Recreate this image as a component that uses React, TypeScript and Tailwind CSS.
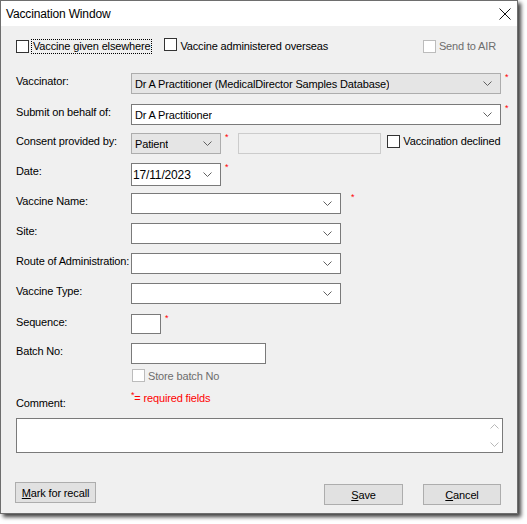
import React from "react";

const font = { fontFamily: '"Liberation Sans", Arial, sans-serif' };

function Chevron({ color = "#606060" }: { color?: string }) {
  return (
    <svg width="9" height="5" viewBox="0 0 9 5" className="shrink-0">
      <path d="M0.5 0.5 L4.5 4.5 L8.5 0.5" fill="none" stroke={color} strokeWidth="1" />
    </svg>
  );
}

function Star({ className = "" }: { className?: string }) {
  return <span className={`text-[9px] leading-none text-[#ff0000] self-start ${className}`}>*</span>;
}

function Check({ disabled = false }: { disabled?: boolean }) {
  return (
    <span
      className={`inline-block w-[13px] h-[13px] shrink-0 bg-white border ${
        disabled ? "border-[#bcbcbc]" : "border-[#333333]"
      }`}
    />
  );
}

interface ComboProps {
  value?: string;
  width: string;
  height?: string;
  gray?: boolean;
}

function Combo({ value = "", width, height = "h-[21px]", gray = false }: ComboProps) {
  return (
    <div
      className={`${width} ${height} flex items-center justify-between pl-[3px] pr-[8px] border shrink-0 ${
        gray ? "bg-[#e5e5e5] border-[#adadad]" : "bg-white border-[#7a7a7a]"
      }`}
    >
      <span className="truncate text-[#000]">{value}</span>
      <Chevron />
    </div>
  );
}

function Row({ label, mt, children }: { label: string; mt: string; children: React.ReactNode }) {
  return (
    <div className={`flex items-start ${mt}`}>
      <div className="w-[115px] shrink-0 pt-[1px]">{label}</div>
      {children}
    </div>
  );
}

function Button({ children, className = "" }: { children: React.ReactNode; className?: string }) {
  return (
    <div
      className={`h-[21px] flex items-center justify-center bg-[#e1e1e1] border border-[#adadad] ${className}`}
    >
      {children}
    </div>
  );
}

export default function App() {
  return (
    <div
      className="w-[527px] h-[524px] bg-white text-[11px] leading-[14px] tracking-[-0.15px] text-black whitespace-nowrap"
      style={font}
    >
      <div className="w-[518px] h-[514px] flex flex-col bg-[#f0f0f0] border border-[#6e6e6e] shadow-[3px_3px_4px_rgba(0,0,0,0.75)]">
        {/* 标题栏 */}
        <div className="h-[25px] bg-white flex items-center justify-between pl-[5px] pr-[6px] shrink-0">
          <span className="text-[12px]">Vaccination Window</span>
          <svg width="12" height="12" viewBox="0 0 12 12">
            <path d="M0.5 0.5 L11.5 11.5 M11.5 0.5 L0.5 11.5" stroke="#111" strokeWidth="1" />
          </svg>
        </div>

        <div className="flex flex-col pl-[15px]">
          {/* 复选框行 */}
          <div className="flex items-center h-[16px] mt-[12px]">
            <Check />
            <span className="ml-[2px] px-[1px] border border-dotted border-black leading-[13px]">
              Vaccine given elsewhere
            </span>
            <span className="ml-[12px]">
              <Check />
            </span>
            <span className="ml-[3px]">Vaccine administered overseas</span>
            <span className="ml-auto mr-[21px] flex items-center">
              <Check disabled />
              <span className="ml-[3px] text-[#6d6d6d]">Send to AIR</span>
            </span>
          </div>

          <Row label="Vaccinator:" mt="mt-[19px]">
            <Combo value="Dr A Practitioner (MedicalDirector Samples Database)" width="w-[370px]" gray />
            <Star className="ml-[4px]" />
          </Row>

          <Row label="Submit on behalf of:" mt="mt-[10px]">
            <Combo value="Dr A Practitioner" width="w-[370px]" />
            <Star className="ml-[4px]" />
          </Row>

          <Row label="Consent provided by:" mt="mt-[8px]">
            <Combo value="Patient" width="w-[90px]" gray />
            <Star className="ml-[4px]" />
            <div className="w-[143px] h-[21px] ml-[10px] bg-[#f0f0f0] border border-[#cccccc] shrink-0" />
            <span className="ml-[6px] mt-[1px] flex items-center">
              <Check />
              <span className="ml-[3px]">Vaccination declined</span>
            </span>
          </Row>

          <Row label="Date:" mt="mt-[9px]">
            <div className="w-[90px] h-[23px] flex items-center justify-between pl-[1px] pr-[8px] bg-white border border-[#7a7a7a] shrink-0">
              <span className="text-[12px]">17/11/2023</span>
              <Chevron />
            </div>
            <Star className="ml-[4px]" />
          </Row>

          <Row label="Vaccine Name:" mt="mt-[7px]">
            <Combo width="w-[210px]" />
            <Star className="ml-[10px]" />
          </Row>

          <Row label="Site:" mt="mt-[9px]">
            <Combo width="w-[210px]" />
          </Row>

          <Row label="Route of Administration:" mt="mt-[9px]">
            <Combo width="w-[210px]" />
          </Row>

          <Row label="Vaccine Type:" mt="mt-[9px]">
            <Combo width="w-[210px]" />
          </Row>

          <Row label="Sequence:" mt="mt-[10px]">
            <div className="w-[30px] h-[20px] bg-white border border-[#7a7a7a] shrink-0" />
            <Star className="ml-[4px]" />
          </Row>

          <Row label="Batch No:" mt="mt-[9px]">
            <div className="w-[135px] h-[21px] bg-white border border-[#7a7a7a] shrink-0" />
          </Row>

          <div className="flex items-center mt-[5px] pl-[116px] h-[13px]">
            <Check disabled />
            <span className="ml-[3px] text-[#6d6d6d]">Store batch No</span>
          </div>

          <div className="flex items-start mt-[9px] h-[21px]">
            <div className="w-[115px] shrink-0 mt-[5px]">Comment:</div>
            <span className="text-[#ff0000] flex">
              <span className="text-[9px] leading-none">*</span>= required fields
            </span>
          </div>

          {/* 备注文本框 */}
          <div className="mt-[6px] w-[487px] h-[35px] bg-white border border-[#7a7a7a] flex justify-end">
            <div className="w-[16px] flex flex-col items-center justify-between py-[5px]">
              <svg width="9" height="5" viewBox="0 0 9 5">
                <path d="M0.5 4.5 L4.5 0.5 L8.5 4.5" fill="none" stroke="#b8b8b8" strokeWidth="1" />
              </svg>
              <Chevron color="#b8b8b8" />
            </div>
          </div>

          {/* 按钮行 */}
          <div className="flex items-start mt-[29px]">
            <Button className="w-[81px] -ml-[1px]">
              <span>
                <span className="underline">M</span>ark for recall
              </span>
            </Button>
            <Button className="w-[79px] ml-[228px] mt-[2px]">
              <span>
                <span className="underline">S</span>ave
              </span>
            </Button>
            <Button className="w-[78px] ml-[20px] mt-[2px]">
              <span>
                <span className="underline">C</span>ancel
              </span>
            </Button>
          </div>
        </div>
      </div>
    </div>
  );
}
